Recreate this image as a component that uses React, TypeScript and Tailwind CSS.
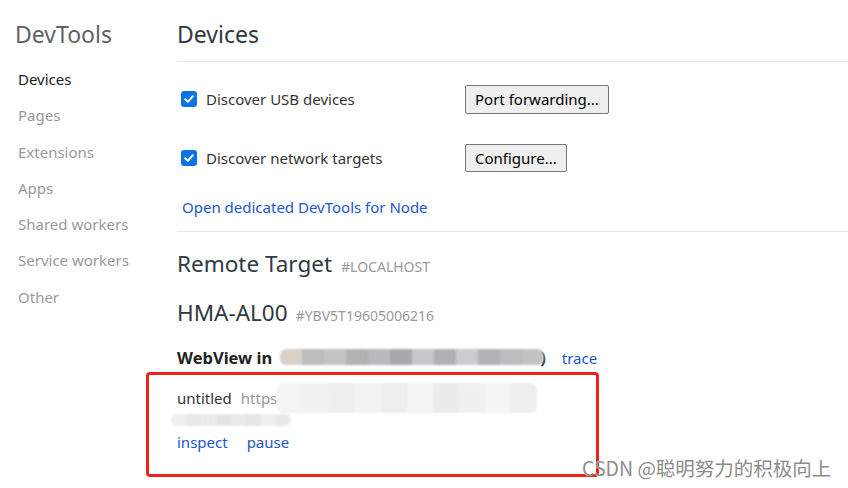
import React from "react";

const navItems = ["Devices", "Pages", "Extensions", "Apps", "Shared workers", "Service workers", "Other"];

function Check() {
  return (
    <span className="w-[16px] h-[16px] rounded-[3px] bg-[#0b73e6] flex items-center justify-center shrink-0">
      <svg width="12" height="12" viewBox="0 0 12 12">
        <path d="M2.2 6.2 L4.9 8.8 L9.8 3.2" stroke="white" strokeWidth="2" fill="none" strokeLinecap="round" strokeLinejoin="round" />
      </svg>
    </span>
  );
}

function Blur({ tones, h, w }: { tones: string[]; h: number; w: number }) {
  return (
    <span className="inline-flex overflow-hidden rounded-[6px] blur-[1px]" style={{ height: h }}>
      {tones.map((t, i) => (
        <span key={i} style={{ width: w, backgroundColor: t }} />
      ))}
    </span>
  );
}

export default function App() {
  return (
    <div className="w-[848px] h-[488px] bg-white relative overflow-hidden flex font-['Noto_Sans',sans-serif] text-[#333]">
      <aside className="w-[177px] shrink-0 pl-[15px] pt-[18px]">
        <div className="text-[23px] leading-[32px] text-[#5f6368]">DevTools</div>
        <nav className="mt-[19px] pl-[3px] flex flex-col">
          {navItems.map((n, i) => (
            <div key={n} className={`h-[36.3px] text-[15px] leading-[20px] ${i === 0 ? "text-[#202124]" : "text-[#999]"}`}>
              {n}
            </div>
          ))}
        </nav>
      </aside>

      <main className="flex-1 pt-[18px]">
        <h1 className="text-[23px] leading-[32px] text-[#303942]">Devices</h1>
        <div className="mt-[11px] border-t border-[#e6e6e6]" />

        <div className="pl-[4px]">
          <div className="mt-[22px] h-[30px] flex items-center">
            <Check />
            <span className="ml-[9px] w-[259px] text-[15px]">Discover USB devices</span>
            <button className="h-[29px] px-[9px] border border-[#767676] rounded-[2px] bg-[#efefef] text-[15px] text-black">
              Port forwarding...
            </button>
          </div>
          <div className="mt-[29px] h-[30px] flex items-center">
            <Check />
            <span className="ml-[9px] w-[259px] text-[15px]">Discover network targets</span>
            <button className="h-[28px] px-[9px] border border-[#767676] rounded-[2px] bg-[#efefef] text-[15px] text-black">
              Configure...
            </button>
          </div>
          <div className="mt-[24px] pl-[1px] text-[15px] leading-[20px] text-[#1a56cf]">Open dedicated DevTools for Node</div>
        </div>

        <div className="mt-[14px] border-t border-[#e6e6e6]" />

        <div className="mt-[17px] flex items-baseline">
          <span className="text-[22.5px] leading-[30px] text-[#303942]">Remote Target</span>
          <span className="ml-[9px] text-[14px] text-[#999]">#LOCALHOST</span>
        </div>
        <div className="mt-[19px] flex items-baseline">
          <span className="text-[22.5px] leading-[30px] text-[#303942]">HMA-AL00</span>
          <span className="ml-[8px] text-[14px] text-[#999]">#YBV5T19605006216</span>
        </div>
        <div className="mt-[20px] flex items-center h-[20px]">
          <span className="text-[16.5px] font-bold text-[#222]">WebView in</span>
          <span className="ml-[8px] mt-[2px]">
            <Blur h={16} w={22} tones={["#d9d0c8", "#bdbdbd", "#c4c4c4", "#b2b2b2", "#b9babc", "#a7a9ab", "#c6c7c9", "#aeb0b2", "#cacbcd", "#b1b2b4", "#bcbdbf", "#c2c2c2"]} />
          </span>
          <span className="text-[16.5px] font-bold text-[#222] -ml-[4px]">)</span>
          <span className="ml-[16px] text-[15px] text-[#1a56cf]">trace</span>
        </div>

        <div className="-ml-[31px] mt-[4px] w-[453px] h-[105px] border-[3px] border-[#f0201a] rounded-[4px] pl-[28px] pt-[12px]">
          <div className="flex items-center h-[22px]">
            <span className="text-[15px] text-[#333]">untitled</span>
            <span className="ml-[9px] text-[15px] text-[#999]">https</span>
            <Blur h={30} w={26} tones={["#f4f4f4", "#f1f1f1", "#efefef", "#f2f2f2", "#eeeeee", "#f3f3f3", "#ececec", "#f0f0f0", "#f5f5f5", "#efefef"]} />
          </div>
          <div className="-ml-[6px] h-[22px] flex items-center">
            <Blur h={12} w={15} tones={["#eeeeee", "#e8e8e8", "#ececec", "#e4e4e4", "#eaeaea", "#e6e6e6", "#efefef", "#e9e9e9"]} />
          </div>
          <div className="flex h-[22px] items-center text-[15px] text-[#1a56cf]">
            <span>inspect</span>
            <span className="ml-[19px]">pause</span>
          </div>
        </div>
      </main>

      <div className="absolute left-[582px] top-[455px] text-[19.5px] leading-[26px] text-[#8c8c8c] font-['Noto_Sans_CJK_SC',sans-serif] [text-shadow:0_0_1px_#fff]">
        CSDN @聪明努力的积极向上
      </div>
    </div>
  );
}
